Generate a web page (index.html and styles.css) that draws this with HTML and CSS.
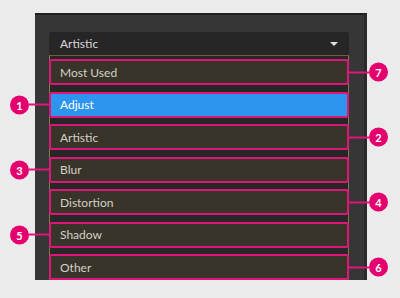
FILE: index.html
```html
<!DOCTYPE html>
<html>
<head>
<meta charset="utf-8">
<link rel="stylesheet" href="styles.css">
</head>
<body>
<div class="panel">
  <div class="select">
    <span>Artistic</span>
    <span class="arrow"></span>
  </div>
  <div class="list">
    <div class="item">Most Used<span class="callout right"><i class="line"></i><b class="dot">7</b></span></div>
    <div class="item active">Adjust<span class="callout left"><b class="dot">1</b><i class="line"></i></span></div>
    <div class="item">Artistic<span class="callout right"><i class="line"></i><b class="dot">2</b></span></div>
    <div class="item">Blur<span class="callout left"><b class="dot">3</b><i class="line"></i></span></div>
    <div class="item">Distortion<span class="callout right"><i class="line"></i><b class="dot">4</b></span></div>
    <div class="item">Shadow<span class="callout left"><b class="dot">5</b><i class="line"></i></span></div>
    <div class="item">Other<span class="callout right"><i class="line"></i><b class="dot">6</b></span></div>
  </div>
</div>
</body>
</html>
```
FILE: styles.css
```css
html, body {
  margin: 0;
  padding: 0;
  background: #ebebeb;
  width: 400px;
  height: 298px;
  overflow: hidden;
  font-family: Lato, "Open Sans", sans-serif;
}
body {
  padding-top: 13px;
  box-sizing: border-box;
}
.panel {
  margin-left: 35px;
  width: 332px;
  height: 267px;
  box-sizing: border-box;
  background: #363636;
  border-top: 2px solid #1f1f1f;
  border-right: 3px solid #2b2b2b;
  padding: 17px 15px 0 14px;
  display: flex;
  flex-direction: column;
}
.select {
  height: 23px;
  background: #262626;
  border-radius: 3px 3px 0 0;
  display: flex;
  align-items: center;
  justify-content: space-between;
  padding: 0 11px 0 11px;
  color: #d6d6d6;
  font-size: 12px;
}
.arrow {
  width: 0;
  height: 0;
  border-left: 4px solid transparent;
  border-right: 4px solid transparent;
  border-top: 4px solid #e0e0e0;
  margin-top: 1px;
}
.list {
  flex: 1;
  background: #272727;
  border-left: 1px solid #8a7748;
  border-right: 1px solid #8a7748;
  border-top: 1px solid #6d5f3c;
  margin: 0;
  padding-top: 3px;
  display: flex;
  flex-direction: column;
  gap: 6.5px;
  box-sizing: border-box;
}
.item {
  position: relative;
  height: 26px;
  margin: 0 -1px;
  box-sizing: border-box;
  border: 2px solid #e0157a;
  border-radius: 3px;
  background: #38342a;
  color: #d3d0c6;
  font-size: 12px;
  display: flex;
  align-items: center;
  padding-left: 9px;
}
.item.active {
  background: #2e95ee;
  color: #ffffff;
}
.callout {
  position: absolute;
  top: 50%;
  display: flex;
  align-items: center;
  transform: translateY(-50%);
}
.callout.left {
  right: 100%;
  margin-right: 2px;
}
.callout.right {
  left: 100%;
  margin-left: 2px;
}
.line {
  display: block;
  height: 2px;
  background: #e0157a;
}
.callout.left .line { width: 20px; }
.callout.right .line { width: 20px; }
.dot {
  width: 19px;
  height: 19px;
  border-radius: 50%;
  background: #e4006d;
  color: #fff;
  font-size: 11px;
  font-weight: 700;
  display: flex;
  align-items: center;
  justify-content: center;
  font-family: Lato, sans-serif;
}
```
